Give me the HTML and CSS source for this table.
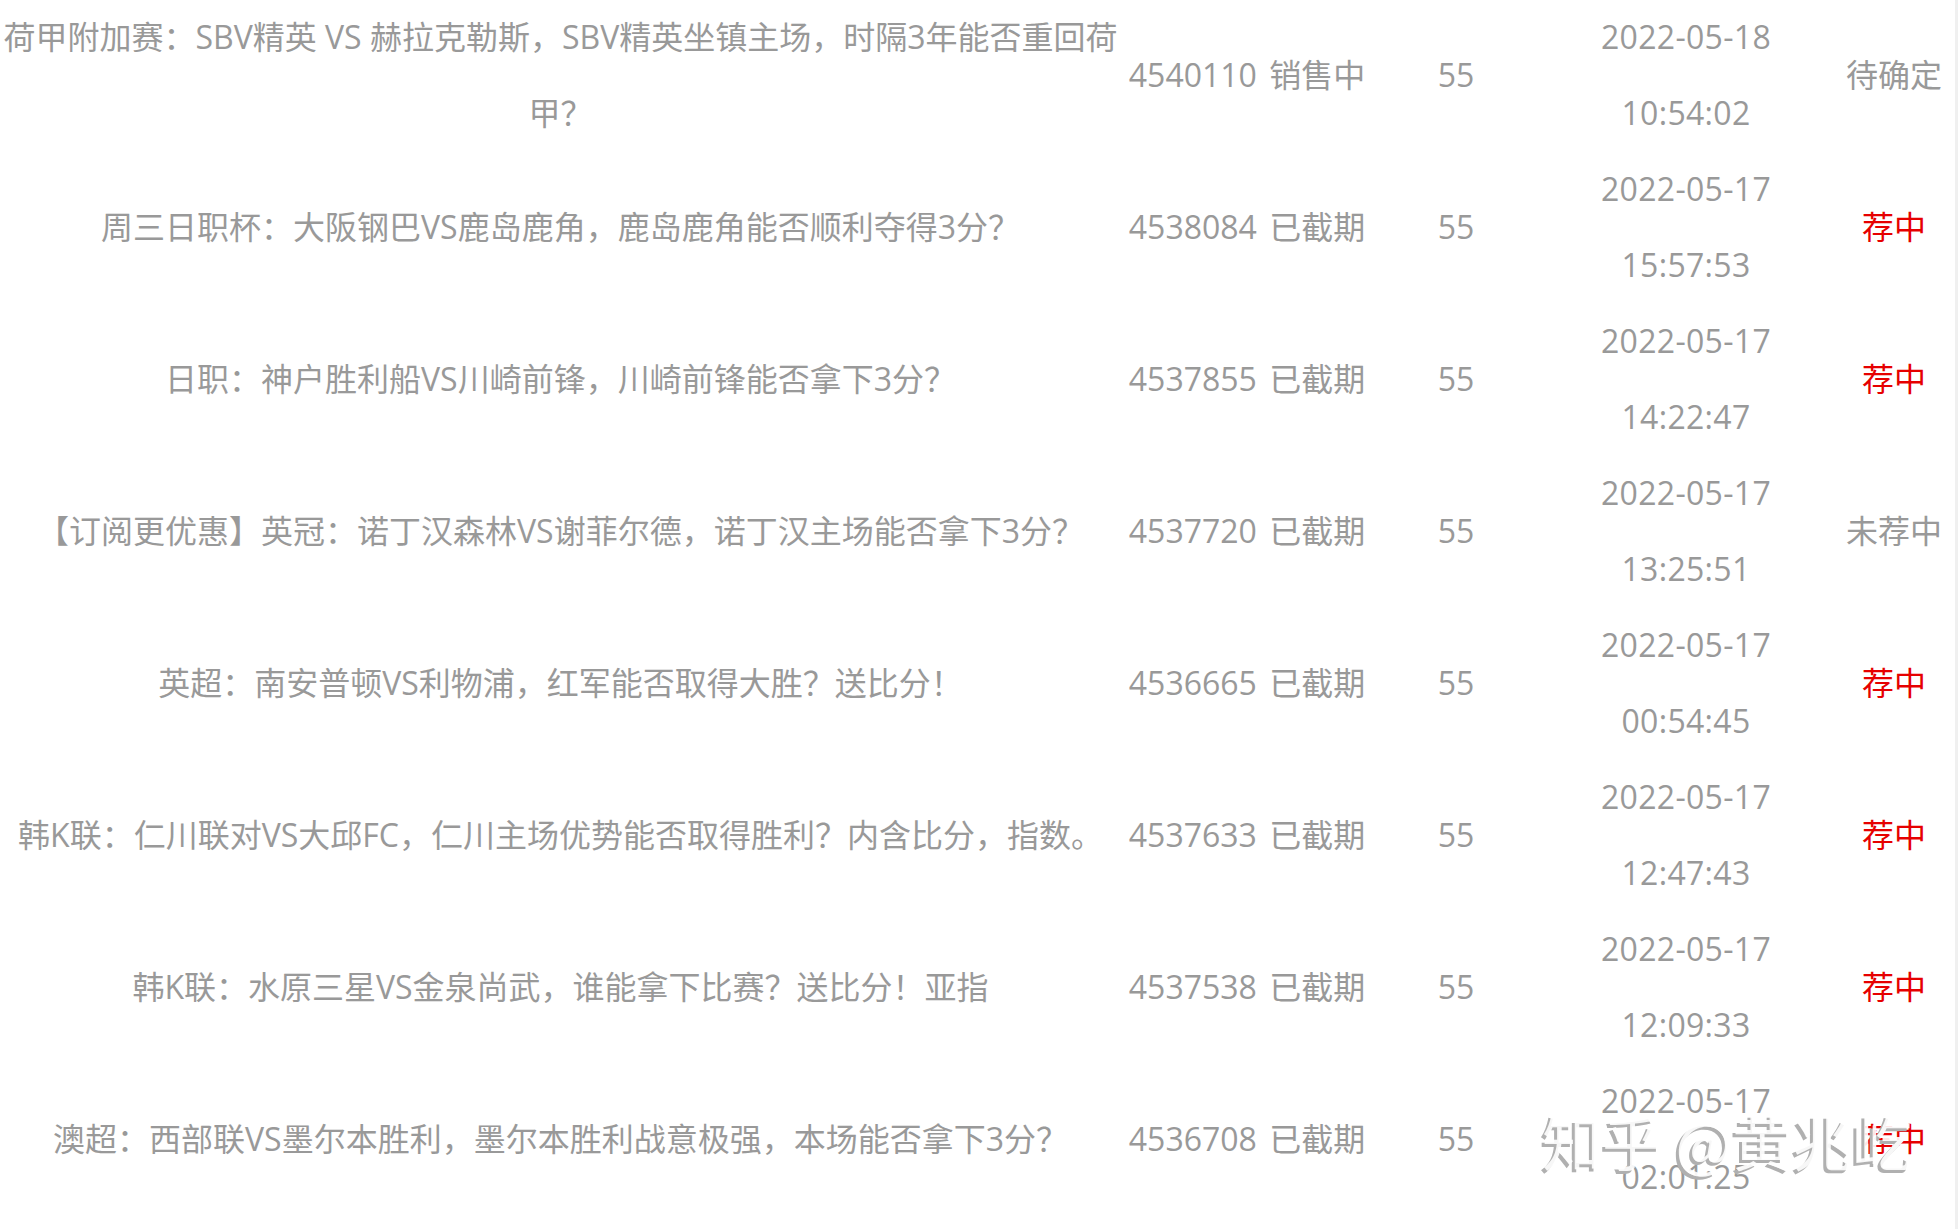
FILE: index.html
```html
<!DOCTYPE html>
<html lang="zh-CN">
<head>
<meta charset="utf-8">
<title>方案列表</title>
<link rel="stylesheet" href="styles.css">
</head>
<body>
<div class="page">
  <div class="list">
    <div class="row">
      <div class="cell title">荷甲附加赛：SBV精英 VS 赫拉克勒斯，SBV精英坐镇主场，时隔3年能否重回荷甲？</div>
      <div class="cell code">4540110 销售中</div>
      <div class="cell price">55</div>
      <div class="cell time">2022-05-18 10:54:02</div>
      <div class="cell result">待确定</div>
    </div>
    <div class="row">
      <div class="cell title">周三日职杯：大阪钢巴VS鹿岛鹿角，鹿岛鹿角能否顺利夺得3分？</div>
      <div class="cell code">4538084 已截期</div>
      <div class="cell price">55</div>
      <div class="cell time">2022-05-17 15:57:53</div>
      <div class="cell result hit">荐中</div>
    </div>
    <div class="row">
      <div class="cell title">日职：神户胜利船VS川崎前锋，川崎前锋能否拿下3分？</div>
      <div class="cell code">4537855 已截期</div>
      <div class="cell price">55</div>
      <div class="cell time">2022-05-17 14:22:47</div>
      <div class="cell result hit">荐中</div>
    </div>
    <div class="row">
      <div class="cell title">【订阅更优惠】英冠：诺丁汉森林VS谢菲尔德，诺丁汉主场能否拿下3分？</div>
      <div class="cell code">4537720 已截期</div>
      <div class="cell price">55</div>
      <div class="cell time">2022-05-17 13:25:51</div>
      <div class="cell result">未荐中</div>
    </div>
    <div class="row">
      <div class="cell title">英超：南安普顿VS利物浦，红军能否取得大胜？送比分！</div>
      <div class="cell code">4536665 已截期</div>
      <div class="cell price">55</div>
      <div class="cell time">2022-05-17 00:54:45</div>
      <div class="cell result hit">荐中</div>
    </div>
    <div class="row">
      <div class="cell title">韩K联：仁川联对VS大邱FC，仁川主场优势能否取得胜利？内含比分，指数。</div>
      <div class="cell code">4537633 已截期</div>
      <div class="cell price">55</div>
      <div class="cell time">2022-05-17 12:47:43</div>
      <div class="cell result hit">荐中</div>
    </div>
    <div class="row">
      <div class="cell title">韩K联：水原三星VS金泉尚武，谁能拿下比赛？送比分！亚指</div>
      <div class="cell code">4537538 已截期</div>
      <div class="cell price">55</div>
      <div class="cell time">2022-05-17 12:09:33</div>
      <div class="cell result hit">荐中</div>
    </div>
    <div class="row">
      <div class="cell title">澳超：西部联VS墨尔本胜利，墨尔本胜利战意极强，本场能否拿下3分？</div>
      <div class="cell code">4536708 已截期</div>
      <div class="cell price">55</div>
      <div class="cell time">2022-05-17 02:01:25</div>
      <div class="cell result hit">荐中</div>
    </div>
  </div>
  <div class="watermark">知乎 @黄兆屹</div>
</div>
</body>
</html>
```

FILE: styles.css
```css
html, body {
  margin: 0;
  padding: 0;
  background: #ffffff;
}

.page {
  position: relative;
  width: 1958px;
  height: 1230px;
  overflow: hidden;
  font-family: "Open Sans", "Noto Sans CJK SC", sans-serif;
  font-size: 32px;
  line-height: 76px;
  color: #999999;
}

.list {
  width: 1955px;
  height: 1230px;
  border-right: 3px solid #f0f0f0;
  margin-top: -1px;
}

.row {
  display: grid;
  grid-template-columns: 1121px 252px 166px 294px 122px;
  min-height: 152px;
  align-items: center;
}

.cell {
  text-align: center;
}

.title {
  word-break: break-all;
}

.code {
  white-space: nowrap;
  word-spacing: 4px;
}

.time {
  letter-spacing: 0.3px;
}

.result.hit {
  color: #e60000;
}

.watermark {
  position: absolute;
  left: 1542px;
  top: 1100px;
  font-family: "Noto Sans CJK SC", sans-serif;
  font-size: 60px;
  line-height: 80px;
  color: rgba(255, 255, 255, 0.9);
  text-shadow: -3px 3px 0 #b0b0b0;
  white-space: nowrap;
}
```
